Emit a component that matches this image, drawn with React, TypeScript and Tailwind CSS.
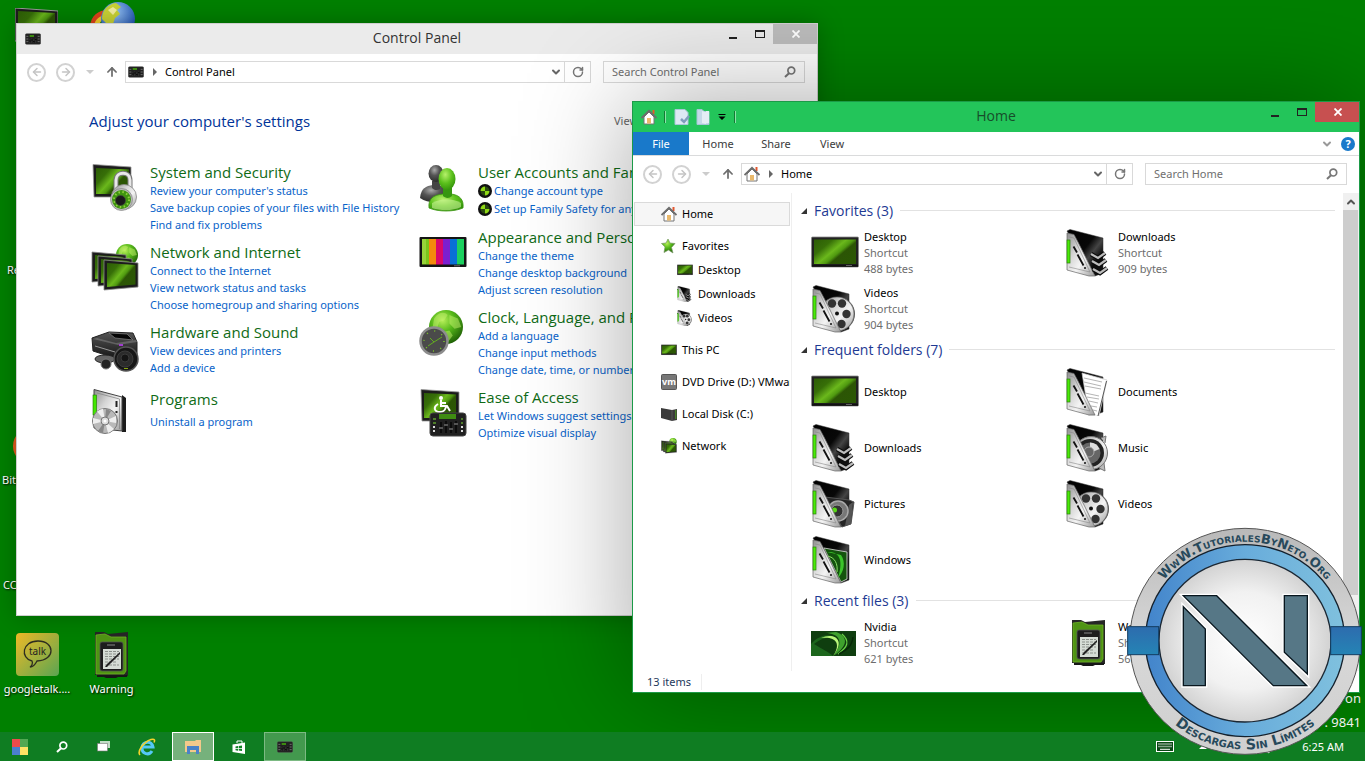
import type { ReactNode } from 'react';
import { ArrowLeft, ArrowRight, ArrowUp, ChevronDown, ChevronUp, RotateCw } from 'lucide-react';

type IconProps = { className?: string };

function Gradients() {
    return (
        <svg className="absolute h-0 w-0" aria-hidden="true">
            <defs>
                <linearGradient id="screen" x1="0" y1="0" x2="1" y2="0.7">
                    <stop offset="0" stopColor="#2c5c06" />
                    <stop offset="0.3" stopColor="#376f08" />
                    <stop offset="0.52" stopColor="#6bb81c" />
                    <stop offset="0.64" stopColor="#4f9910" />
                    <stop offset="0.72" stopColor="#2c5505" />
                    <stop offset="1" stopColor="#2b5704" />
                </linearGradient>
                <linearGradient id="silver" x1="0" y1="0" x2="1" y2="1">
                    <stop offset="0" stopColor="#8d8d8d" />
                    <stop offset="0.35" stopColor="#d5d5d5" />
                    <stop offset="0.6" stopColor="#f4f4f4" />
                    <stop offset="1" stopColor="#9a9a9a" />
                </linearGradient>
                <linearGradient id="black" x1="0" y1="0" x2="1" y2="1">
                    <stop offset="0" stopColor="#000" />
                    <stop offset="0.45" stopColor="#080808" />
                    <stop offset="0.6" stopColor="#444" />
                    <stop offset="0.75" stopColor="#0c0c0c" />
                    <stop offset="1" stopColor="#151515" />
                </linearGradient>
                <linearGradient id="plastic" x1="0" y1="0" x2="0" y2="1">
                    <stop offset="0" stopColor="#555" />
                    <stop offset="1" stopColor="#151515" />
                </linearGradient>
                <radialGradient id="globe" cx="0.4" cy="0.3" r="0.75">
                    <stop offset="0" stopColor="#b9f05a" />
                    <stop offset="0.45" stopColor="#56b81a" />
                    <stop offset="1" stopColor="#1b5a04" />
                </radialGradient>
                <radialGradient id="person" cx="0.4" cy="0.3" r="0.8">
                    <stop offset="0" stopColor="#b6f06a" />
                    <stop offset="0.5" stopColor="#5bc01c" />
                    <stop offset="1" stopColor="#2b8a08" />
                </radialGradient>
                <radialGradient id="shade" cx="0.4" cy="0.3" r="0.8">
                    <stop offset="0" stopColor="#aaa" />
                    <stop offset="0.4" stopColor="#555" />
                    <stop offset="1" stopColor="#222" />
                </radialGradient>
            </defs>
        </svg>
    );
}

function TiltedScreen({ x, y }: { x: number; y: number }) {
    return (
        <g transform={`translate(${x} ${y})`}>
            <path d="M0 0 L34 3 V27 L0 30Z" fill="#1c1c1c" stroke="#888" strokeWidth="0.8" />
            <path d="M3 3 L31.500 5 V24.500 L3 27Z" fill="url(#screen)" />
        </g>
    );
}

function MonitorIcon({ className = 'size-12' }: IconProps) {
    return (
        <svg viewBox="0 0 48 48" className={className} aria-hidden="true">
            <rect x="0.500" y="8" width="47" height="30" rx="1" fill="#222" stroke="#8a8a8a" strokeWidth="0.800" />
            <rect x="3" y="10.500" width="42" height="24.500" fill="url(#screen)" />
            <path d="M1 36.800h46" stroke="#111" strokeWidth="2" />
            <path d="M35 36.500h6" stroke="#999" strokeWidth="0.600" />
        </svg>
    );
}

function SecurityIcon({ className = 'size-12' }: IconProps) {
    return (
        <svg viewBox="0 0 48 48" className={className} aria-hidden="true">
            <path d="M2 0.500 L40 3 V33 L3 33Z" fill="#1c1c1c" stroke="#999" strokeWidth="0.800" />
            <path d="M5 4 L38 5.500 V30 L5 30Z" fill="url(#screen)" />
            <path d="M25 27V16c0-9 14-9 14 0v13" fill="none" stroke="#777" strokeWidth="5" />
            <path d="M25 27V16c0-9 14-9 14 0v13" fill="none" stroke="#e8e8e8" strokeWidth="3" />
            <circle cx="33" cy="33" r="12.500" fill="url(#silver)" stroke="#888" strokeWidth="0.800" />
            <circle cx="30.500" cy="35.500" r="11" fill="#bbb" stroke="#777" strokeWidth="0.600" />
            <circle cx="30.500" cy="35.500" r="9.500" fill="#3f9410" />
            <circle cx="30.500" cy="35.500" r="7.500" fill="none" stroke="#8fd13f" strokeDasharray="1.500 2.500" strokeWidth="2" />
            <circle cx="29.500" cy="36.500" r="5" fill="#1a1a1a" stroke="#444" strokeWidth="0.600" />
        </svg>
    );
}

function Globe({ cx, cy, r }: { cx: number; cy: number; r: number }) {
    return (
        <g transform={`translate(${cx} ${cy}) scale(${r / 10})`}>
            <circle r="10" fill="url(#globe)" />
            <path d="M-7 -5c3-4 6-4 8-2l-2 3-3 1-1 3-3 1zM2 -7l5 2 2 5-4 1-3-3zM-2 3l4-1 2 3-3 4-3-3z" fill="#c2ef6c" opacity="0.500" />
        </g>
    );
}

function NetworkIcon({ className = 'size-12' }: IconProps) {
    return (
        <svg viewBox="0 0 48 48" className={className} aria-hidden="true">
            <Globe cx={36} cy={11} r={11} />
            <TiltedScreen x={1} y={8} />
            <TiltedScreen x={7} y={12} />
            <TiltedScreen x={13} y={16} />
        </svg>
    );
}

function HardwareIcon({ className = 'size-12' }: IconProps) {
    return (
        <svg viewBox="0 0 48 48" className={className} aria-hidden="true">
            <path d="M1 14 L18 8 L42 9 L46 18 V30 L27 35 L2 27Z" fill="url(#plastic)" stroke="#222" />
            <path d="M18 9 L36 10 L42 16 L24 14Z" fill="#060606" stroke="#777" strokeWidth="0.800" />
            <path d="M2 15 L27 21 L46 18 L45 16 L25 19 L6 14Z" fill="#888" opacity="0.500" />
            <path d="M4 22 L24 28" stroke="#999" />
            <rect x="28" y="20" width="4" height="2" fill="#a23bd0" />
            <ellipse cx="14" cy="35" rx="10" ry="4" fill="#666" stroke="#222" />
            <circle cx="15" cy="40" r="5" fill="#222" stroke="#777" />
            <circle cx="35" cy="35" r="12" fill="#171717" stroke="#555" strokeWidth="1.500" />
            <circle cx="34" cy="35" r="8" fill="#2b2b2b" stroke="#3c3c3c" />
            <circle cx="34" cy="34" r="4" fill="#151515" stroke="#3a3a3a" />
            <path d="M33 44.500h4" stroke="#8aa812" />
        </svg>
    );
}

function ProgramsIcon({ className = 'size-12' }: IconProps) {
    return (
        <svg viewBox="0 0 48 48" className={className} aria-hidden="true">
            <path d="M31 6 L35 9 V43 L31 43Z" fill="#1b1b1b" />
            <path d="M3 0.500 L31 8 V42 L3 39Z" fill="url(#silver)" stroke="#444" />
            <path d="M6 4 L28.500 10 V40" fill="none" stroke="#888" strokeWidth="0.800" />
            <rect x="2" y="6" width="3.500" height="20" fill="#43e600" stroke="#1e7300" strokeWidth="0.600" />
            <path d="M25.500 12v6M25.500 22v2" stroke="#222" strokeWidth="2" />
            <circle cx="14" cy="32" r="12.500" fill="#b9b9b9" stroke="#777" />
            <path d="M14 32L6 22.500a12.500 12.500 0 0 1 6-2.700zM14 32l9 8a12.500 12.500 0 0 1-6 4zM14 32l11-5v7zM14 32L2 35v-6z" fill="#eee" />
            <path d="M14 32l1-12 5 2zM14 32l-2 12-5-2z" fill="#888" />
            <circle cx="14" cy="32" r="4" fill="#ddd" stroke="#777" />
            <circle cx="14" cy="32" r="1.500" fill="#fff" />
        </svg>
    );
}

function UsersIcon({ className = 'size-12' }: IconProps) {
    return (
        <svg viewBox="0 0 48 48" className={className} aria-hidden="true">
            <path d="M1 34c1-10 6-12 13-13h5c6 1 9 5 10 12l-8 5c-8 1-14 0-20-4z" fill="url(#shade)" />
            <path d="M13 17h8v8c-3 2-6 1-8-1z" fill="#444" />
            <ellipse cx="17" cy="9.500" rx="7.500" ry="8.500" fill="url(#shade)" />
            <path d="M10 44c-1-9 4-13 14-14h8c9 1 13 6 12 14-9 4-25 4-34 0z" fill="url(#person)" stroke="#3b9610" strokeWidth="0.800" />
            <path d="M24 23h9v9c-3 3-7 2-9 0z" fill="#369610" />
            <ellipse cx="28" cy="15" rx="8.500" ry="11" fill="url(#person)" />
            <path d="M13 39c10-5 20-5 29 0v4c-8 4-20 4-29 1z" fill="#d4f7a2" opacity="0.550" />
        </svg>
    );
}

function AppearanceIcon({ className = 'size-12' }: IconProps) {
    const bars = ['#7ac51b', '#f48a0c', '#d9086c', '#7b1fd1', '#0970d6', '#1cd05f'];
    return (
        <svg viewBox="0 0 48 48" className={className} aria-hidden="true">
            <rect x="0.500" y="8" width="47" height="30" rx="1" fill="#141414" />
            {bars.map((color, i) => (
                <rect key={color} x={3 + i * 7} y="10" width="7" height="25.500" fill={color} />
            ))}
            <path d="M3 10h4v25h-4z" fill="#b6e35a" opacity="0.500" />
            <path d="M35 36.800h6" stroke="#aaa" strokeWidth="0.600" />
        </svg>
    );
}

function ClockIcon({ className = 'size-12' }: IconProps) {
    return (
        <svg viewBox="0 0 48 48" className={className} aria-hidden="true">
            <Globe cx={27} cy={18} r={17} />
            <circle cx="15" cy="32" r="13.500" fill="#4a4a4a" stroke="#8d8d8d" strokeWidth="2.500" />
            <circle cx="15" cy="32" r="10" fill="none" stroke="#7cc42a" strokeWidth="1.500" strokeDasharray="1 6.850" />
            <path d="M11 29l4 4 8-5M15 33l-6 4" fill="none" stroke="#63ad1f" />
        </svg>
    );
}

function MixerIcon({ className = 'size-4' }: IconProps) {
    return (
        <svg viewBox="0 0 48 34" className={className} aria-hidden="true">
            <rect x="1" y="1" width="46" height="32" rx="4" fill="#202020" stroke="#4a4a4a" strokeWidth="1.500" />
            <rect x="14" y="5" width="13" height="6" fill="#3c8a10" />
            <path d="M14 18v11M20 15v14M26 18v11M32 15v14" stroke="#444" strokeWidth="1.500" />
            <path d="M12 23h5M18 20h5M24 25h5M30 19h5" stroke="#080808" strokeWidth="3" />
            <path d="M4 9h6M4 17h6M4 25h6M38 9h6M38 17h6M38 25h6" stroke="#7d7d7d" strokeWidth="2.500" />
        </svg>
    );
}

function AccessIcon({ className = 'size-12' }: IconProps) {
    return (
        <svg viewBox="0 0 48 48" className={className} aria-hidden="true">
            <path d="M2 0.500 L40 3 V32 L3 32Z" fill="#1c1c1c" stroke="#999" strokeWidth="0.800" />
            <path d="M5 4 L37 5.500 V29 L5 29Z" fill="url(#screen)" />
            <circle cx="22" cy="9" r="2" fill="#fff" />
            <path d="M22 11v6h6l3 5M22 14h5M19 15c-5 3-4 8 2 8 4 0 5-2 6-5" fill="none" stroke="#fff" strokeWidth="2" />
            <rect x="11" y="24" width="36" height="23" rx="3" fill="#202020" stroke="#444" />
            <rect x="20" y="25" width="17" height="5" fill="#3f8c12" />
            <path d="M22 33v11M27 32v12M32 33v11M37 32v12" stroke="#050505" strokeWidth="1.500" />
            <path d="M20 39h4M25 36h4M30 40h4M35 35h4" stroke="#555" strokeWidth="2" />
            <path d="M14 38h2M14 42h2M42 38h2M42 42h2" stroke="#ddd" strokeWidth="2" />
            <path d="M14 30h3M14 34h3M42 30h2M42 34h2" stroke="#5d9d2e" strokeWidth="1.500" />
        </svg>
    );
}

function FolderIcon({ className = 'size-12', inside, onTop }: IconProps & { inside?: ReactNode; onTop?: ReactNode }) {
    return (
        <svg viewBox="0 0 48 48" className={className} aria-hidden="true">
            <path d="M2 2 L5 0.500 L38 9 V44 L30 47Z" fill="url(#black)" stroke="#333" strokeWidth="0.500" />
            {inside}
            <path d="M2 4 L9 5.500 L13 13 L30 47 L24 47 L2 41Z" fill="url(#silver)" stroke="#666" strokeWidth="0.700" />
            <path d="M4 8 L9 9 L25 43 L4 38" fill="none" stroke="#888" strokeWidth="0.600" />
            <rect x="2" y="11" width="3" height="23" fill="#49ea08" stroke="#2b7d0a" strokeWidth="0.700" />
            <path d="M8.500 17.500l3.500 6M12.500 25.500l6 11" stroke="#111" strokeWidth="1.800" />
            <circle cx="20" cy="39" r="1" fill="#111" />
            {onTop}
        </svg>
    );
}

function DownloadsIcon({ className }: IconProps) {
    return (
        <FolderIcon
            className={className}
            onTop={
                <g fill="none">
                    <path d="M26 25l7 4 7-5M27 32l7 4 7-5M28 40l7 4 7-5" stroke="#0c0c0c" strokeWidth="4.500" />
                    <path d="M26 25l7 4 7-5M27 32l7 4 7-5M28 40l7 4 7-5" stroke="#bdbdbd" strokeWidth="2.200" />
                </g>
            }
        />
    );
}

function VideosIcon({ className }: IconProps) {
    return (
        <FolderIcon
            className={className}
            inside={
                <g>
                    <circle cx="27" cy="29" r="17" fill="#555" />
                    <circle cx="26" cy="29" r="17" fill="url(#silver)" stroke="#666" strokeWidth="0.700" />
                    <circle cx="21" cy="18.500" r="4.200" fill="#333" />
                    <circle cx="31" cy="18.500" r="4.200" fill="#333" />
                    <circle cx="35.500" cy="29" r="4.200" fill="#333" />
                    <circle cx="30.500" cy="39" r="4.200" fill="#333" />
                    <circle cx="26" cy="28.500" r="2" fill="#111" />
                </g>
            }
        />
    );
}

function MusicIcon({ className }: IconProps) {
    return (
        <FolderIcon
            className={className}
            inside={
                <g>
                    <path d="M36 14l5-2-1 7M34 44l6 3-1-8" fill="#bbb" stroke="#777" />
                    <circle cx="26" cy="29" r="16.500" fill="url(#silver)" stroke="#777" />
                    <circle cx="25" cy="29" r="14" fill="#222" />
                    <circle cx="25" cy="29" r="10.500" fill="#666" />
                    <path d="M25 18.500a10.500 10.500 0 0 1 9.500 6.500l-9.500 4z" fill="#ddd" />
                    <circle cx="24" cy="28" r="5" fill="#666" stroke="#aaa" />
                </g>
            }
        />
    );
}

function DocumentsIcon({ className }: IconProps) {
    return (
        <FolderIcon
            className={className}
            inside={
                <g>
                    <path d="M17 5 L42 12 L34 48 L24 48Z" fill="#fff" stroke="#ccc" strokeWidth="0.700" />
                    <path d="M41.500 13 L33 48" stroke="#555" />
                    <path d="M19 10l18 4M19 14l17 4M20 18l16 3M20 25l14 3M22 29l12 2M24 33l9 2M26 38l6 1M28 42l4 1" stroke="#b5b5b5" />
                </g>
            }
        />
    );
}

function PicturesIcon({ className }: IconProps) {
    return (
        <FolderIcon
            className={className}
            inside={
                <g>
                    <path d="M14 17 L38 20 L43 22 L40 44 L31 47Z" fill="#252525" stroke="#555" />
                    <path d="M42 22 L40 44 L34 46 L38 25Z" fill="#555" />
                    <circle cx="27" cy="31" r="10" fill="#777" stroke="#aaa" strokeWidth="1.500" />
                    <circle cx="26" cy="31" r="6" fill="#333" stroke="#999" />
                    <circle cx="23.500" cy="30" r="2.500" fill="#58d815" />
                </g>
            }
        />
    );
}

function WindowsFolderIcon({ className }: IconProps) {
    return (
        <FolderIcon
            className={className}
            inside={
                <g>
                    <path d="M13 12 L36 16 V43 L30 46Z" fill="#14540d" stroke="#ddd" strokeWidth="0.800" />
                    <path d="M16 16c14-1 16 10 11 26 6-6 8-16 3-23z" fill="#3cc42b" />
                    <path d="M16 20c8 1 11 8 10 16" fill="none" stroke="#8be067" />
                </g>
            }
        />
    );
}

function NvidiaThumb() {
    return (
        <svg viewBox="0 0 45 25" className="h-[25px] w-[45px]" aria-hidden="true">
            <rect width="45" height="25" fill="#0f3e0f" />
            <path d="M0 13C9 3 20 2 26 8c-6-3-15-2-23 5 8 5 15 8 19 12H0z" fill="#1c661c" />
            <path d="M14 2c14 0 20 9 8 23 16-10 15-20 3-24z" fill="#3fa12d" />
            <path d="M10 7c12-6 26 1 12 18 9-13 2-20-12-18z" fill="#b9f779" />
            <path d="M31 3c8 7 6 13-4 20" fill="none" stroke="#69d245" strokeWidth="1.200" />
            <path d="M42 6c-1 9-6 13-14 17" fill="none" stroke="#082808" strokeWidth="1.500" />
        </svg>
    );
}

function TabletFileIcon({ className = 'size-12' }: IconProps) {
    return (
        <svg viewBox="0 0 48 48" className={className} aria-hidden="true">
            <path d="M7 1 L16 1 L20 3 L40 1 V45 L7 44Z" fill="#262626" />
            <path d="M8 4 L17 3 L23 6 L38 6 V40 L36 43 H8Z" fill="#4f9414" stroke="#6eb324" strokeWidth="0.800" />
            <rect x="12" y="11" width="23" height="29" rx="2" fill="#1d1d1d" stroke="#555" strokeWidth="0.800" />
            <path d="M19 14h8" stroke="#888" />
            <rect x="15" y="18" width="18" height="20" fill="#d5dcd5" />
            <path d="M17 20.500h14M17 23h14M17 25.500h14M17 28h14M17 31h12M17 34h14" stroke="#8b918b" strokeDasharray="3 1" />
            <path d="M17 36l2-3 13-12v2L19 36z" fill="#222" />
            <path d="M9 44h30v2H30l-2 1H18l-2-1H9z" fill="#171717" />
        </svg>
    );
}

function HouseIcon({ className = 'size-4' }: IconProps) {
    return (
        <svg viewBox="0 0 16 16" className={className} aria-hidden="true">
            <path d="M11.500 1h2v4h-2z" fill="#e2572f" />
            <path d="M3 8l5-5 5 5v7H3z" fill="#fff" stroke="#747474" />
            <path d="M0.500 9L8 1.800 15.500 9" fill="none" stroke="#6d6d6d" strokeWidth="1.800" />
            <rect x="6" y="9" width="4" height="5.500" fill="#eab96c" />
        </svg>
    );
}

function StarIcon() {
    return (
        <svg viewBox="0 0 16 16" className="size-4" aria-hidden="true">
            <path d="M7 1l2 4 5 .5-3.500 4L12 15 7.500 12 3 14.500l1-5.500-3.500-3.500L5 5z" fill="url(#globe)" stroke="#7a9a66" strokeWidth="0.700" />
        </svg>
    );
}

function VmIcon() {
    return (
        <svg viewBox="0 0 16 16" className="size-4" aria-hidden="true">
            <rect x="0.500" y="0.500" width="15" height="15" rx="1" fill="#777" stroke="#555" />
            <text x="8" y="11" textAnchor="middle" fontSize="9" fontWeight="700" fill="#fff">vm</text>
        </svg>
    );
}

function DiskIcon() {
    return (
        <svg viewBox="0 0 16 16" className="size-4" aria-hidden="true">
            <path d="M0 2l11 2 5-1v11l-5 1-11-3z" fill="#3a3a3a" />
            <path d="M11 4v11" stroke="#666" strokeWidth="0.700" />
            <path d="M14.800 4v9" stroke="#4d9d23" />
        </svg>
    );
}

function SearchGlyph({ className = 'size-3' }: IconProps) {
    return (
        <svg viewBox="0 0 12 12" className={className} fill="none" stroke="currentColor" aria-hidden="true">
            <circle cx="7.300" cy="4.600" r="3.400" strokeWidth="1.700" />
            <path d="M5 7.200L1 11" strokeWidth="2" />
        </svg>
    );
}

function ShieldIcon() {
    return (
        <svg viewBox="0 0 14 14" className="size-3.5 shrink-0" aria-hidden="true">
            <circle cx="7" cy="7" r="7" fill="#111" />
            <path d="M7 7V2.500A4.500 4.500 0 0 0 2.500 7zM7 7v4.500A4.500 4.500 0 0 0 11.500 7z" fill="#8fd916" />
            <path d="M7 7V2.500A4.500 4.500 0 0 1 11.500 7zM7 7v4.500A4.500 4.500 0 0 1 2.500 7z" fill="#2a4a10" />
        </svg>
    );
}

function TalkIcon() {
    return (
        <svg viewBox="0 0 43 43" className="size-[43px]" aria-hidden="true">
            <defs>
                <linearGradient id="talk" x1="0" y1="0" x2="1" y2="1">
                    <stop offset="0" stopColor="#efba27" />
                    <stop offset="1" stopColor="#5aa551" />
                </linearGradient>
            </defs>
            <rect width="43" height="43" rx="4" fill="url(#talk)" />
            <path d="M16 28c-12-3-10-20 6-20 17 0 18 19-1 20-1 2-3 6-7 6 2-1 3-4 2-6z" fill="none" stroke="#2d2d20" strokeWidth="1.300" />
            <text x="21.500" y="22" textAnchor="middle" fontSize="10" fill="#222" className="[text-shadow:none]">talk</text>
        </svg>
    );
}

function CaptionButtons({ closeClass }: { closeClass: string }) {
    return (
        <div className="flex h-5 items-center justify-self-end self-start">
            <button type="button" aria-label="Minimize" className="flex h-5 w-[27px] items-center justify-center pt-2">
                <span className="h-0.5 w-2 bg-[#222]" />
            </button>
            <button type="button" aria-label="Maximize" className="flex h-5 w-[27px] items-center justify-center">
                <span className="h-2 w-2.5 border border-t-2 border-[#222]" />
            </button>
            <button type="button" aria-label="Close" className={`flex h-5 w-11 items-center justify-center pl-0.5 text-white ${closeClass}`}>
                <svg viewBox="0 0 8 8" className="size-2" stroke="currentColor" strokeWidth="1.800" aria-hidden="true">
                    <path d="M0.500 0.500l7 7M7.500 0.500l-7 7" />
                </svg>
            </button>
        </div>
    );
}

function NavBar({ place, icon }: { place: string; icon: ReactNode }) {
    const round = 'flex size-[19px] items-center justify-center rounded-full border-2 border-[#d2d2d2] text-[#c4c4c4]';
    return (
        <div className="flex items-center pt-[7px] pr-3 pb-2 pl-[5px]">
            <div className="flex w-[29px] justify-center">
                <button type="button" aria-label="Back" className={round}><ArrowLeft className="size-3" strokeWidth={3} /></button>
            </div>
            <div className="flex w-[29px] justify-center">
                <button type="button" aria-label="Forward" className={round}><ArrowRight className="size-3" strokeWidth={3} /></button>
            </div>
            <button type="button" aria-label="Recent locations" className="flex w-[19px] justify-center">
                <svg viewBox="0 0 8 4" className="h-1 w-2" fill="#ccc" aria-hidden="true"><path d="M0 0h8L4 4z" /></svg>
            </button>
            <button type="button" aria-label="Up" className="flex w-[26px] justify-center text-[#6e6e6e]">
                <ArrowUp className="size-3.5" strokeWidth={3} />
            </button>
            <div className="flex h-[22px] flex-1 items-center border border-[#d9d9d9]">
                <span className="pl-0.5">{icon}</span>
                <span className="flex w-[21px] justify-center">
                    <svg viewBox="0 0 4 8" className="h-2 w-1" fill="#666" aria-hidden="true"><path d="M0 0v8l4-4z" /></svg>
                </span>
                <a href="#" className="flex-1 text-black">{place}</a>
                <button type="button" aria-label="Previous locations" className="flex w-4 justify-center text-[#666]">
                    <ChevronDown className="size-3" strokeWidth={4} />
                </button>
                <button type="button" aria-label="Refresh" className="flex h-full w-[26px] items-center justify-center border-l border-[#d9d9d9] text-[#777]">
                    <RotateCw className="size-3" strokeWidth={3} />
                </button>
            </div>
            <label className="ml-3 flex h-[22px] w-[202px] items-center border border-[#d9d9d9] pr-2 pl-2 text-[#777]">
                <input aria-label={`Search ${place}`} placeholder={`Search ${place}`} className="min-w-0 flex-1 bg-transparent outline-none placeholder:text-[#6f6f6f]" />
                <SearchGlyph />
            </label>
        </div>
    );
}

type Category = {
    title: string;
    icon: ReactNode;
    links: string[];
    shield?: boolean;
    className?: string;
};

const leftCategories: Category[] = [
    { title: 'System and Security', icon: <SecurityIcon />, links: ["Review your computer's status", 'Save backup copies of your files with File History', 'Find and fix problems'] },
    { title: 'Network and Internet', icon: <NetworkIcon />, links: ['Connect to the Internet', 'View network status and tasks', 'Choose homegroup and sharing options'] },
    { title: 'Hardware and Sound', icon: <HardwareIcon />, links: ['View devices and printers', 'Add a device'] },
    { title: 'Programs', icon: <ProgramsIcon />, links: ['Uninstall a program'], className: 'gap-1 pt-0.5' },
];

const rightCategories: Category[] = [
    { title: 'User Accounts and Family Safety', icon: <UsersIcon />, links: ['Change account type', 'Set up Family Safety for any user'], shield: true },
    { title: 'Appearance and Personalization', icon: <AppearanceIcon />, links: ['Change the theme', 'Change desktop background', 'Adjust screen resolution'] },
    { title: 'Clock, Language, and Region', icon: <ClockIcon />, links: ['Add a language', 'Change input methods', 'Change date, time, or number formats'] },
    { title: 'Ease of Access', icon: <AccessIcon />, links: ['Let Windows suggest settings', 'Optimize visual display'] },
];

function CategoryColumn({ items }: { items: Category[] }) {
    return (
        <div className="flex flex-col gap-[9px]">
            {items.map((item) => (
                <section key={item.title} className="flex min-h-14 gap-[11px]">
                    <div className="w-12 shrink-0 pt-0.5">{item.icon}</div>
                    <div className={`flex flex-col whitespace-nowrap ${item.className ?? ''}`}>
                        <h3><a href="#" className="block font-['Open_Sans',sans-serif] text-[15px] leading-5 text-[#0f6b16]">{item.title}</a></h3>
                        <ul>
                            {item.links.map((link) => (
                                <li key={link} className={item.shield ? 'flex h-[18px] items-center gap-0.5' : 'flex h-[17px] items-center'}>
                                    {item.shield && <ShieldIcon />}
                                    <a href="#" className="text-[#0963c9]">{link}</a>
                                </li>
                            ))}
                        </ul>
                    </div>
                </section>
            ))}
        </div>
    );
}

function ControlPanelWindow() {
    return (
        <section aria-label="Control Panel" className="absolute top-[23px] bottom-[145px] left-4 w-[802px] overflow-hidden border border-[#cfcfcf] bg-white shadow-[0_0_24px_rgba(0,0,0,0.25)]">
            <header className="grid h-[30px] grid-cols-[1fr_auto_1fr] items-center bg-[#ebebeb]">
                <MixerIcon className="ml-2 h-3 w-4" />
                <h1 className="pb-0.5 font-['Open_Sans',sans-serif] text-[14px] text-[#333]">Control Panel</h1>
                <CaptionButtons closeClass="bg-[#bcbcbc]" />
            </header>
            <NavBar place="Control Panel" icon={<MixerIcon className="h-3 w-4" />} />
            <div className="flex items-center justify-between pt-[18px] pr-[72px] pb-px pl-[72px]">
                <h2 className="font-['Open_Sans',sans-serif] text-[15px] leading-6 text-[#003399]">Adjust your computer&apos;s settings</h2>
                <span className="w-[131px] text-[#666]">View by: Category</span>
            </div>
            <div className="grid grid-cols-[328px_1fr] pt-7 pl-[74px]">
                <CategoryColumn items={leftCategories} />
                <CategoryColumn items={rightCategories} />
            </div>
        </section>
    );
}

type FolderItem = { name: string; icon: ReactNode; size?: string };

const folderGroups: { title: string; items: FolderItem[] }[] = [
    {
        title: 'Favorites (3)',
        items: [
            { name: 'Desktop', icon: <MonitorIcon />, size: '488 bytes' },
            { name: 'Downloads', icon: <DownloadsIcon />, size: '909 bytes' },
            { name: 'Videos', icon: <VideosIcon />, size: '904 bytes' },
        ],
    },
    {
        title: 'Frequent folders (7)',
        items: [
            { name: 'Desktop', icon: <MonitorIcon /> },
            { name: 'Documents', icon: <DocumentsIcon /> },
            { name: 'Downloads', icon: <DownloadsIcon /> },
            { name: 'Music', icon: <MusicIcon /> },
            { name: 'Pictures', icon: <PicturesIcon /> },
            { name: 'Videos', icon: <VideosIcon /> },
            { name: 'Windows', icon: <WindowsFolderIcon /> },
        ],
    },
    {
        title: 'Recent files (3)',
        items: [
            { name: 'Nvidia', icon: <NvidiaThumb />, size: '621 bytes' },
            { name: 'Warning', icon: <TabletFileIcon />, size: '567 bytes' },
        ],
    },
];

const sidebarGroups = [
    [
        { name: 'Favorites', icon: <StarIcon />, nested: false },
        { name: 'Desktop', icon: <MonitorIcon className="size-4" />, nested: true },
        { name: 'Downloads', icon: <DownloadsIcon className="size-4" />, nested: true },
        { name: 'Videos', icon: <VideosIcon className="size-4" />, nested: true },
    ],
    [{ name: 'This PC', icon: <MonitorIcon className="size-4" />, nested: false }],
    [{ name: 'DVD Drive (D:) VMware', icon: <VmIcon />, nested: false }],
    [{ name: 'Local Disk (C:)', icon: <DiskIcon />, nested: false }],
    [{ name: 'Network', icon: <NetworkIcon className="size-4" />, nested: false }],
];

function Sidebar() {
    return (
        <nav className="flex w-[159px] shrink-0 flex-col gap-2 overflow-hidden border-r border-[#efefef] pt-[9px] pr-px pl-px whitespace-nowrap text-black">
            <a href="#" className="flex h-6 items-center gap-[5px] border border-[#dadada] bg-[#f6f6f6] pl-[26px]">
                <HouseIcon />
                Home
            </a>
            {sidebarGroups.map((group) => (
                <ul key={group[0].name}>
                    {group.map((entry) => (
                        <li key={entry.name}>
                            <a href="#" className={`flex h-6 items-center gap-[5px] overflow-hidden ${entry.nested ? 'pl-[43px]' : 'pl-[27px]'}`}>
                                <span className="shrink-0">{entry.icon}</span>
                                {entry.name}
                            </a>
                        </li>
                    ))}
                </ul>
            ))}
        </nav>
    );
}

function FolderGroup({ title, items }: { title: string; items: FolderItem[] }) {
    return (
        <section>
            <div className="flex h-[27px] items-center gap-[7px] pb-0.5 pl-[9px]">
                <svg viewBox="0 0 6 6" className="size-1.5" fill="#333" aria-hidden="true"><path d="M6 0v6H0z" /></svg>
                <h2 className="font-['Open_Sans',sans-serif] text-[14px] text-[#1e3a93]">{title}</h2>
                <span className="h-px flex-1 bg-[#e2e2e2]" />
            </div>
            <ul className="grid grid-cols-[254px_254px] pl-[19px]">
                {items.map((item) => (
                    <li key={item.name} className="flex h-14 items-center gap-[5px]">
                        <span className="flex size-12 items-center">{item.icon}</span>
                        <div className="leading-4">
                            <p className="text-black">{item.name}</p>
                            {item.size && <p className="text-[#6d6d6d]">Shortcut</p>}
                            {item.size && <p className="text-[#6d6d6d]">{item.size}</p>}
                        </div>
                    </li>
                ))}
            </ul>
        </section>
    );
}

function HomeWindow() {
    return (
        <section aria-label="Home" className="absolute top-[101px] right-[5px] left-[632px] border border-[#1c9a48] bg-white shadow-[0_0_100px_rgba(0,0,0,0.35)]">
            <header className="grid h-[30px] grid-cols-[1fr_auto_1fr] items-center bg-[#23c55a]">
                <div className="flex items-center pl-2">
                    <HouseIcon />
                    <span className="mx-[7px] h-3 w-0.5 border-l border-[#117b34] bg-[#8de3a9]" />
                    <button type="button" aria-label="Properties" className="ml-px">
                        <svg viewBox="0 0 16 16" className="size-4" aria-hidden="true">
                            <path d="M1 0.500h10l3 3V15.500H1z" fill="#dce9f3" stroke="#a9c7d8" />
                            <path d="M7 10l3 3 5-6" fill="none" stroke="#7f9dbd" strokeWidth="2.500" />
                        </svg>
                    </button>
                    <button type="button" aria-label="New folder" className="ml-1.5">
                        <svg viewBox="0 0 16 16" className="size-4" aria-hidden="true">
                            <path d="M1 0.500h5l2 2h5v13H1z" fill="#c5d9e8" stroke="#a6c5d6" />
                            <path d="M6 2l4 1v12l-4-1zM10 2h3v12h-3z" fill="#e4edf5" />
                        </svg>
                    </button>
                    <button type="button" aria-label="Customize toolbar" className="ml-1.5">
                        <svg viewBox="0 0 8 6" className="h-1.5 w-2" aria-hidden="true">
                            <path d="M0.500 0h7v1h-7zM0.500 2.500h7L4 6z" fill="#000" />
                        </svg>
                    </button>
                    <span className="mx-2 h-3 w-0.5 border-l border-[#117b34] bg-[#8de3a9]" />
                </div>
                <h1 className="pb-0.5 font-['Open_Sans',sans-serif] text-[14px] text-[#174d2a]">Home</h1>
                <CaptionButtons closeClass="bg-[#c75050]" />
            </header>
            <div className="flex h-6 items-stretch border-b border-[#dadbdc] text-[#3b3b3b]">
                <button type="button" className="w-14 bg-[#1979ca] text-white">File</button>
                <button type="button" className="w-[58px]">Home</button>
                <button type="button" className="w-[58px]">Share</button>
                <button type="button" className="w-[54px]">View</button>
                <div className="ml-auto flex items-center gap-2 pr-1">
                    <button type="button" aria-label="Expand the ribbon" className="text-[#999]"><ChevronDown className="size-3" strokeWidth={4} /></button>
                    <button type="button" aria-label="Help" className="size-3.5 rounded-full bg-[#1979ca] font-bold leading-3.5 text-white">?</button>
                </div>
            </div>
            <NavBar place="Home" icon={<HouseIcon />} />
            <div className="flex">
                <Sidebar />
                <main className="min-w-0 flex-1 pt-[5px] pr-2">
                    {folderGroups.map((group) => (
                        <FolderGroup key={group.title} title={group.title} items={group.items} />
                    ))}
                </main>
                <div className="flex w-4 flex-col bg-[#f0f0f0]">
                    <button type="button" aria-label="Scroll up" className="flex h-[17px] items-center justify-center text-[#555]">
                        <ChevronUp className="size-3" strokeWidth={4} />
                    </button>
                    <div className="h-[385px] w-[15px] bg-[#cdcdcd]" />
                </div>
            </div>
            <footer className="flex h-[21px] items-center pl-3.5 text-[#1e395b]">
                <span className="border-r border-[#eee] pr-2.5">13 items</span>
            </footer>
        </section>
    );
}

function DesktopIcons() {
    const label = 'absolute text-white [text-shadow:1px_1px_2px_#000]';
    return (
        <div>
            <svg viewBox="0 0 43 34" className="absolute top-2 left-[15px] h-[34px] w-[43px]" aria-hidden="true">
                <path d="M0 0l43 3v30H0z" fill="#1c1c1c" stroke="#999" />
                <path d="M3 3l37 2v26H3z" fill="url(#screen)" />
            </svg>
            <svg viewBox="0 0 46 40" className="absolute top-0.5 left-[89px] h-10 w-[46px]" aria-hidden="true">
                <defs>
                    <radialGradient id="earth" cx="0.4" cy="0.3" r="0.7">
                        <stop offset="0" stopColor="#9bc8f8" />
                        <stop offset="1" stopColor="#1c50ae" />
                    </radialGradient>
                </defs>
                <path d="M1 24C2 14 9 8 19 8l-2 5c-5 0-9 4-10 11z" fill="#e0431c" />
                <path d="M5 24c1-7 6-11 13-11l-2 4c-3 0-5 3-6 7z" fill="#f3cf2c" />
                <circle cx="29" cy="17" r="17" fill="url(#earth)" />
                <path d="M13 17c0-9 6-15 14-16l5 4-4 3 3 4-5 4-2 6-7-1z" fill="#c9d335" />
                <path d="M19 8l5-3 4 3-4 5z" fill="#f4efa0" />
            </svg>
            <span className={`${label} top-[262px] left-[7px]`}>Re</span>
            <span className="absolute top-[428px] left-[13px] size-9 rounded-full bg-[#e35b1f]" />
            <span className={`${label} top-[472px] left-0.5`}>Bit</span>
            <span className={`${label} top-[577px] left-[3px]`}>CC</span>
            <button type="button" className="absolute top-[633px] left-0 flex w-[74px] flex-col items-center gap-[5px] text-white [text-shadow:1px_1px_2px_#000]">
                <TalkIcon />
                googletalk....
            </button>
            <button type="button" className="absolute top-[631px] left-[74px] flex w-[75px] flex-col items-center gap-0.5 text-white [text-shadow:1px_1px_2px_#000]">
                <TabletFileIcon />
                Warning
            </button>
            <p className="absolute right-1 bottom-[27px] text-right text-[13px] leading-6 text-white">
                on
                <br />
                . 9841
            </p>
        </div>
    );
}

function Taskbar() {
    return (
        <footer className="absolute inset-x-0 bottom-0 flex h-[29px] items-stretch bg-[#0f7d22] text-white">
            <button type="button" aria-label="Start" className="flex w-10 items-center justify-center">
                <span className="grid grid-cols-2">
                    <span className="size-2 bg-[#ee4b4b]" />
                    <span className="size-2 bg-[#52a852]" />
                    <span className="size-2 bg-[#4c7fce]" />
                    <span className="size-2 bg-[#ffe365]" />
                </span>
            </button>
            <button type="button" aria-label="Search" className="flex w-[43px] items-center justify-center"><SearchGlyph /></button>
            <button type="button" aria-label="Task view" className="flex w-10 items-center justify-center">
                <svg viewBox="0 0 13 11" className="h-[11px] w-[13px]" aria-hidden="true">
                    <path d="M3 0h10v7H3z" fill="#bfdcc4" />
                    <rect x="0.500" y="2.500" width="10" height="7.500" fill="#fff" stroke="#777" strokeWidth="0.600" />
                </svg>
            </button>
            <div className="flex gap-1 pl-[3px]">
                <button type="button" aria-label="Internet Explorer" className="flex w-[42px] items-center justify-center">
                    <svg viewBox="0 0 18 18" className="size-[18px]" fill="none" aria-hidden="true">
                        <path d="M14 13c-3 5-10 3-10-3 0-7 10-8 11-1H5" stroke="#55c8f6" strokeWidth="3" />
                        <path d="M2 17C-1 14 5 4 13 1.500c4-1 4 1 3 3" stroke="#f6d32c" strokeWidth="1.600" />
                    </svg>
                </button>
                <button type="button" aria-label="File Explorer" className="flex w-[42px] items-center justify-center border border-white bg-[#76b17c]">
                    <svg viewBox="0 0 16 15" className="h-[15px] w-4" aria-hidden="true">
                        <path d="M0 2h10l1-1h5v12H0z" fill="#f3c98b" />
                        <path d="M2 7h12v8h-3v-4H5v4H2z" fill="#4a82c8" />
                    </svg>
                </button>
                <button type="button" aria-label="Store" className="flex w-[42px] items-center justify-center">
                    <svg viewBox="0 0 14 14" className="size-3.5" aria-hidden="true">
                        <path d="M5 3V1h5v2" fill="none" stroke="#fff" />
                        <path d="M0.500 4.500l12.500-2v11.500l-12.500-2z" fill="#fff" />
                        <path d="M3.500 6.500l2.500-.4V8H3.500zM6.700 6l3.300-.5V8H6.700zM3.500 8.700H6v2l-2.500-.4zM6.700 8.700H10V11l-3.300-.4z" fill="#0f8022" />
                    </svg>
                </button>
                <button type="button" aria-label="Control Panel" className="flex w-[42px] items-center justify-center border border-[#7cba83] bg-[#43994e]">
                    <MixerIcon className="h-3 w-4" />
                </button>
            </div>
            <div className="ml-auto flex items-center pr-[21px]">
                <svg viewBox="0 0 18 11" className="h-[11px] w-[18px]" aria-hidden="true">
                    <rect x="0.500" y="0.500" width="17" height="10" fill="#0a4714" stroke="#fff" />
                    <path d="M2.500 3h13M2.500 5.500h13" stroke="#fff" strokeDasharray="1 1" strokeWidth="1.300" />
                    <path d="M4 8.300h10" stroke="#fff" />
                </svg>
                <svg viewBox="0 0 8 4" className="ml-[25px] h-1 w-2" fill="#fff" aria-hidden="true"><path d="M4 0l4 4H0z" /></svg>
                <svg viewBox="0 0 36 16" className="ml-[30px] h-4 w-9" aria-hidden="true">
                    <circle cx="4" cy="12" r="3" fill="#e02020" />
                    <path d="M28 5l4-3v12l-4-3zM34 5v6" fill="#fff" stroke="#fff" />
                </svg>
                <time className="ml-[29px]">6:25 AM</time>
            </div>
        </footer>
    );
}

// viewBox units are a third of a pixel
function NetoBadge() {
    return (
        <svg viewBox="195 3 720 720" className="absolute right-0 bottom-0 size-60" role="img" aria-label="Tutoriales By Neto">
            <defs>
                <linearGradient id="ring" x1="0" y1="0" x2="1" y2="0">
                    <stop offset="0" stopColor="#4284cb" />
                    <stop offset="0.5" stopColor="#68acdb" />
                    <stop offset="1" stopColor="#80c1de" />
                </linearGradient>
                <linearGradient id="rim" x1="0" y1="0" x2="0" y2="1">
                    <stop offset="0" stopColor="#b9b9b9" />
                    <stop offset="0.5" stopColor="#d8d8d8" />
                    <stop offset="1" stopColor="#cfcfcf" />
                </linearGradient>
                <radialGradient id="face">
                    <stop offset="0" stopColor="#fff" />
                    <stop offset="0.6" stopColor="#f1f1f1" />
                    <stop offset="1" stopColor="#d2d2d2" />
                </radialGradient>
                <linearGradient id="block" x1="0" y1="0" x2="0" y2="1">
                    <stop offset="0" stopColor="#2d6cae" />
                    <stop offset="1" stopColor="#2584b5" />
                </linearGradient>
                <path id="arc-top" d="M247 364A308 299 0 0 1 863 364" />
                <path id="arc-bottom" d="M226 364A329 324 0 0 0 884 364" />
            </defs>
            <ellipse cx="555" cy="364" rx="346" ry="339" fill="url(#rim)" stroke="#555" strokeWidth="3" />
            <ellipse cx="555" cy="362" rx="299" ry="288" fill="url(#ring)" stroke="#14202c" strokeWidth="4" />
            <ellipse cx="555" cy="362" rx="258" ry="244" fill="url(#face)" stroke="#1b2733" strokeWidth="4" />
            <g fill="url(#block)" stroke="#123c60" strokeWidth="3">
                <rect x="203" y="320" width="93" height="84" />
                <rect x="812" y="320" width="92" height="84" />
            </g>
            <g stroke="#fff" strokeWidth="12" fill="#fff">
                <path d="M370 227H470L740 497H640z" />
                <path d="M370 260L436 327V497H370z" />
                <path d="M673 227H742V462L673 397z" />
            </g>
            <g stroke="#08161e" strokeWidth="4" fill="#567786">
                <path d="M370 227H470L740 497H640z" />
                <path d="M370 260L436 327V497H370z" />
                <path d="M673 227H742V462L673 397z" />
            </g>
            <g fill="#27495b" fontFamily="DejaVu Sans" fontWeight="700" className="[font-variant:small-caps]">
                <text textAnchor="middle" fontSize="39">
                    <textPath href="#arc-top" startOffset="50%">WwW.TutorialesByNeto.Org</textPath>
                </text>
                <text textAnchor="middle" fontSize="43">
                    <textPath href="#arc-bottom" startOffset="50%">Descargas Sin Límites</textPath>
                </text>
            </g>
        </svg>
    );
}

export default function App() {
    return (
        <div className="relative h-screen overflow-hidden bg-[#008000] font-['Noto_Sans',sans-serif] text-[11px] leading-4">
            <Gradients />
            <DesktopIcons />
            <ControlPanelWindow />
            <HomeWindow />
            <Taskbar />
            <NetoBadge />
        </div>
    );
}
